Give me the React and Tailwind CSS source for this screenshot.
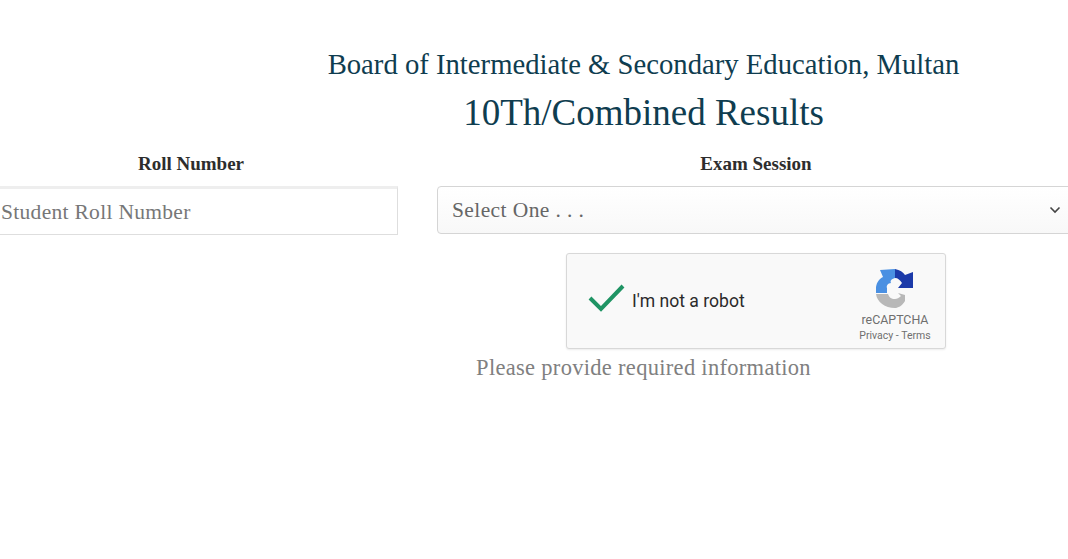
const serif = "font-['Liberation_Serif',serif]";

function RecaptchaLogo() {
  return (
    <svg width="38" height="40" viewBox="0 0 38 40">
      <path d="M0 25 L0 19 C1 14 3 11 7 9 L4 2 L19 1 L19 10 C15 11 14 13 15 15 C12 15 10 18 11 20 L11 25 Z" fill="#4a90e2" />
      <path d="M19 1 C24 2 27 4 29 7 L37 4 L37 20 L22 20 L26 15 C24 12 22 10 19 10 Z" fill="#1c3aa9" />
      <path d="M0 26 L12 26 C13 29 15 31 19 31 C21 31 23 30 25 28 L22 25 L29 27 L29 33 C26 38 22 40 19 40 C9 40 1 34 0 26 Z" fill="#b8b8b8" />
    </svg>
  );
}

export default function App() {
  return (
    <div className={`h-[559px] overflow-hidden bg-white ${serif}`}>
      <div className="pt-[47px] pl-[219px] w-[1068px] flex flex-col items-center text-[#0f3d50]">
        <h2 className="text-[28.7px] leading-[35px] whitespace-nowrap">Board of Intermediate &amp; Secondary Education, Multan</h2>
        <h1 className="text-[37px] leading-[44px] mt-[9px] whitespace-nowrap">10Th/Combined Results</h1>
      </div>

      <div className="flex gap-[39px] -ml-4 mt-[17px] w-[1091px]">
        <div className="w-[414px] shrink-0 flex flex-col items-center">
          <label className="text-[19px] leading-[24px] font-bold text-[#2d2d2d] mb-[10px]">Roll Number</label>
          <div className="w-full h-[49px] border border-[#dedede] border-t-[3px] border-t-[#eeeeee] bg-white flex items-center pl-[16px] pt-[1px] text-[21.5px] tracking-[0.3px] text-[#777777]">
            Student Roll Number
          </div>
        </div>

        <div className="w-[638px] shrink-0 flex flex-col items-center">
          <label className="text-[19px] leading-[24px] font-bold text-[#2d2d2d] mb-[10px]">Exam Session</label>
          <div className="w-full h-[48px] border border-[#d5d5d5] rounded-[4px] bg-gradient-to-b from-white to-[#f8f8f8] flex items-center justify-between pl-[14px] pr-[13px] text-[21.5px] tracking-[0.4px] text-[#666666]">
            <span className="pt-[1px]">Select One . . .</span>
            <svg width="12" height="8" viewBox="0 0 12 8" fill="none" stroke="#444444" strokeWidth="1.6">
              <path d="M1.5 1.5 L6 6 L10.5 1.5" />
            </svg>
          </div>

          <div className="mt-[19px] w-[380px] h-[96px] shrink-0 border border-[#d8d8d8] rounded-[3px] bg-[#f9f9f9] shadow-[0_1px_2px_rgba(0,0,0,0.08)] flex items-center justify-between pl-[21px] pr-[14px]">
            <div className="flex items-center gap-[7px]">
              <svg width="37" height="28" viewBox="0 0 37 28" fill="none" stroke="#1f9464" strokeWidth="4" className="-mt-[5px]">
                <path d="M2 14 L13 25 L35 2" />
              </svg>
              <span className="font-['Roboto',sans-serif] text-[17.6px] text-[#2b2b2b]">I'm not a robot</span>
            </div>
            <div className="flex flex-col items-center pt-[8px] font-['Roboto',sans-serif] text-[#6f6f6f] w-[72px]">
              <RecaptchaLogo />
              <span className="text-[12.4px] leading-[14px] mt-[5px]">reCAPTCHA</span>
              <span className="text-[10.5px] leading-[12px] mt-[3px] whitespace-nowrap">Privacy - Terms</span>
            </div>
          </div>
        </div>
      </div>

      <div className="pl-[219px] w-[1068px] flex justify-center mt-[6px]">
        <p className="text-[22.5px] tracking-[0.3px] leading-[26px] text-[#808080] whitespace-nowrap">Please provide required information</p>
      </div>
    </div>
  );
}
